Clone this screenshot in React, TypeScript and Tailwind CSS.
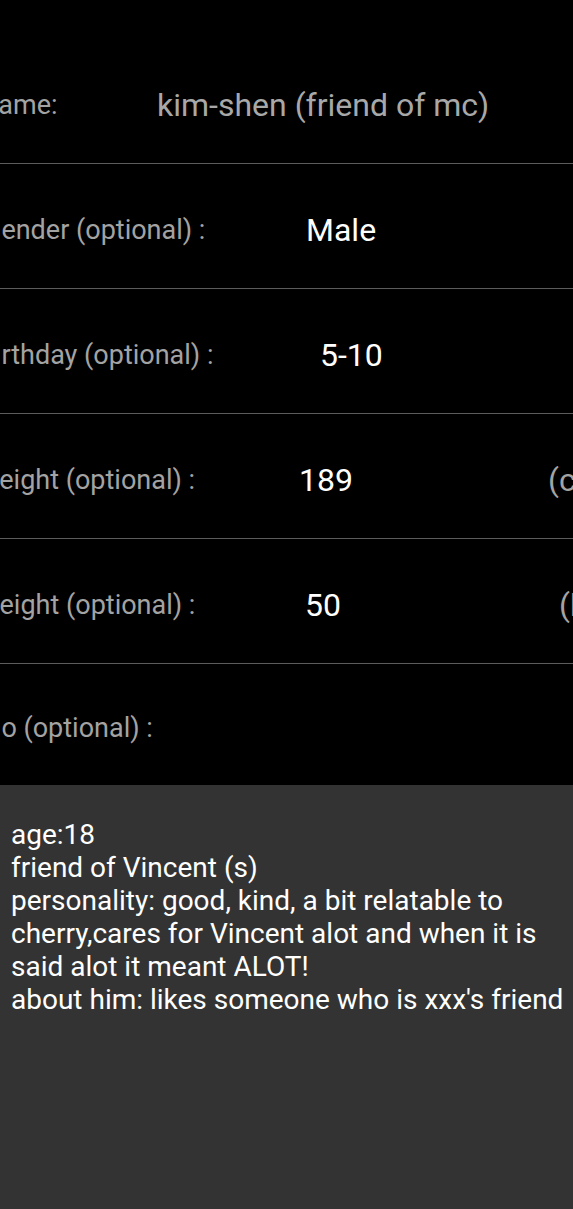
import React from "react";

const font = { fontFamily: "Roboto, 'Noto Sans', sans-serif" };

export default function App() {
  return (
    <div className="w-[573px] h-[1209px] bg-black overflow-hidden flex flex-col" style={font}>
      <div className="h-[39px] shrink-0" />
      <div className="flex h-[125px] shrink-0 items-center pt-[8px] border-b border-[#5c5c5c] whitespace-nowrap">
        <span className="ml-[-21px] w-[178px] shrink-0 text-[27px] text-[#a3a3a3]">Name:</span>
        <span className="text-[32px] text-[#a8a8a8]">kim-shen (friend of mc)</span>
      </div>
      <div className="flex h-[125px] shrink-0 items-center pt-[8px] border-b border-[#5c5c5c] whitespace-nowrap">
        <span className="ml-[-17px] w-[323px] shrink-0 text-[27px] text-[#a3a3a3]">Gender (optional) :</span>
        <span className="text-[32px] text-white">Male</span>
      </div>
      <div className="flex h-[125px] shrink-0 items-center pt-[8px] border-b border-[#5c5c5c] whitespace-nowrap">
        <span className="ml-[-22px] w-[342px] shrink-0 text-[27px] text-[#a3a3a3]">Birthday (optional) :</span>
        <span className="text-[32px] text-white">5-10</span>
      </div>
      <div className="flex h-[125px] shrink-0 items-center pt-[8px] border-b border-[#5c5c5c] whitespace-nowrap">
        <span className="ml-[-20px] w-[319px] shrink-0 text-[27px] text-[#a3a3a3]">Height (optional) :</span>
        <span className="w-[249px] shrink-0 text-[32px] text-white">189</span>
        <span className="text-[32px] text-[#a3a3a3]">(cm)</span>
      </div>
      <div className="flex h-[125px] shrink-0 items-center pt-[8px] border-b border-[#5c5c5c] whitespace-nowrap">
        <span className="ml-[-24px] w-[329px] shrink-0 text-[27px] text-[#a3a3a3]">Weight (optional) :</span>
        <span className="w-[254px] shrink-0 text-[32px] text-white">50</span>
        <span className="text-[32px] text-[#a3a3a3]">(kg)</span>
      </div>
      <div className="flex h-[121px] shrink-0 items-center pt-[8px] whitespace-nowrap">
        <span className="ml-[-22px] text-[27px] text-[#a3a3a3]">Bio (optional) :</span>
      </div>
      <div className="flex-1 bg-[#333333] pl-[11px] pr-[4px] pt-[33px] text-[28px] leading-[33px] text-white">
        age:18
        <br />
        friend of Vincent (s)
        <br />
        personality: good, kind, a bit relatable to cherry,cares for Vincent alot and when it is said alot it meant ALOT!
        <br />
        about him: likes someone who is xxx's friend
      </div>
    </div>
  );
}
